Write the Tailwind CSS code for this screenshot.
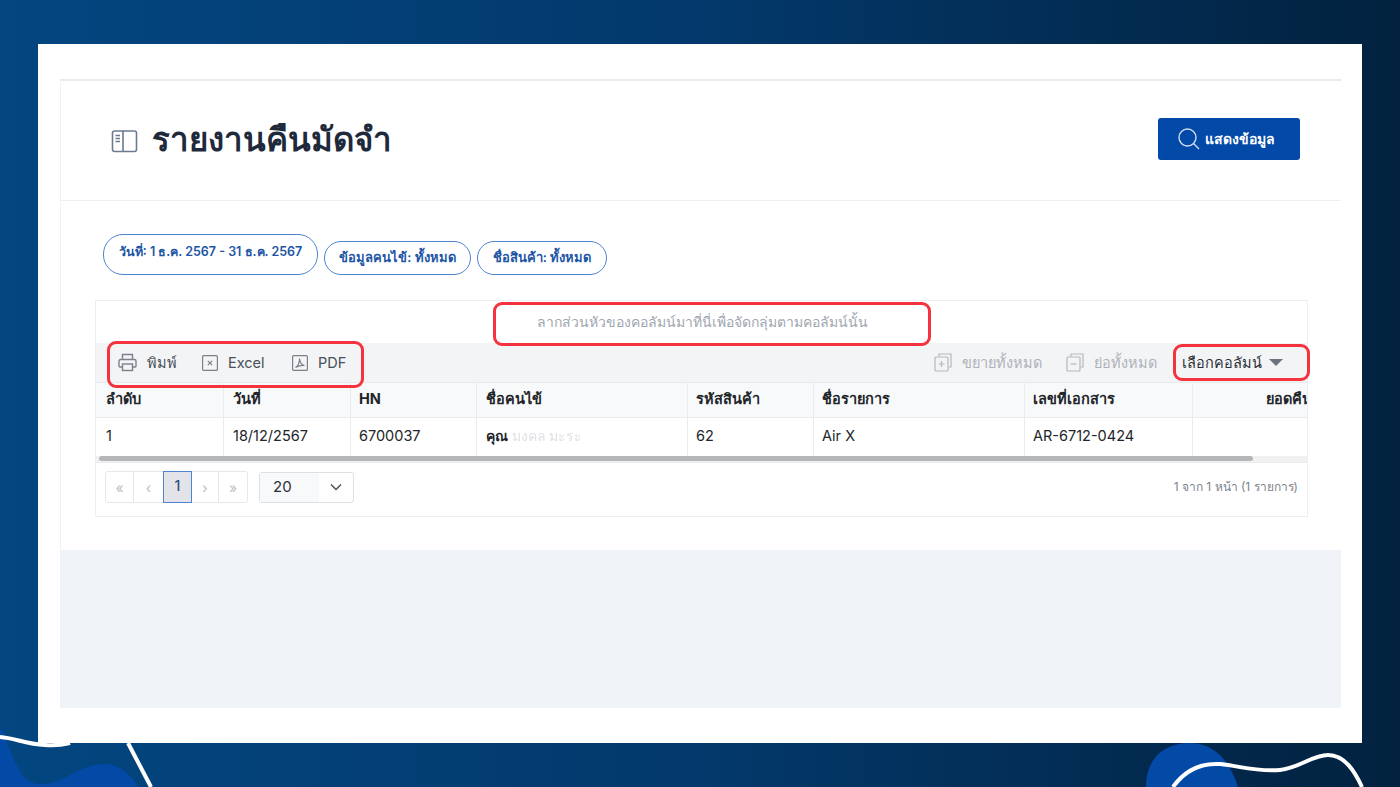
<!DOCTYPE html>
<html lang="en">
<head>
  <meta charset="UTF-8">
  <title>รายงานคืนมัดจำ</title>
  <script src="https://cdn.jsdelivr.net/npm/@tailwindcss/browser@4"></script>
</head>
<body class="relative w-[1400px] h-[787px] overflow-hidden bg-gradient-to-r from-[#034680] via-[#03396c] to-[#02223f] font-['Inter','Noto_Sans',sans-serif] text-[#212529]">

  <!-- Decoration at the bottom corners -->
  <svg class="absolute left-0 bottom-0" width="260" height="87" viewBox="0 0 260 87" fill="none">
    <path d="M0 28C8 36 10 60 25 78C32 86 50 86 65 78C78 70 92 63 107 64C122 66 132 76 138 87H0Z" fill="#0349a6"/>
    <path d="M0 37C15 38 25 44 45 45C55 46 62 45 70 43" stroke="#fff" stroke-width="4"/>
    <path d="M128 43L151 87" stroke="#fff" stroke-width="4"/>
  </svg>
  <svg class="absolute left-[1100px] bottom-0" width="300" height="87" viewBox="0 0 300 87" fill="none">
    <path d="M46 87C46 60 62 43 90 43C115 43 130 62 138 87Z" fill="#0349a6"/>
    <path d="M73 87C85 70 102 63 120 64C140 66 155 72 180 70C200 68 212 55 228 55C245 55 255 72 262 87" stroke="#fff" stroke-width="4"/>
  </svg>

  <!-- White frame -->
  <div class="relative mt-[44px] ml-[38px] w-[1324px] h-[699px] bg-white pt-[35px] pl-[22px] pr-[21px]">
    <div class="h-[629px] flex flex-col border-t-2 border-l border-t-[#e8eaee] border-l-[#f1f2f5] bg-white">

      <!-- Title bar -->
      <div class="h-[120px] shrink-0 flex items-center justify-between pl-[50px] pr-[41px] border-b border-[#eceff4]">
        <div class="flex items-center gap-[14px]">
          <svg width="27" height="24" viewBox="0 0 27 24" fill="none" stroke="#6b7a90" stroke-width="1.6">
            <rect x="1.5" y="2" width="24" height="20.5" rx="2"/>
            <path d="M12 2v20.5M4.5 6.5h4.5M4.5 9.5h4.5M4.5 12.5h4.5"/>
          </svg>
          <h1 class="text-[33px] leading-none font-bold text-[#1e2a3b] mb-[2px]">รายงานคืนมัดจำ</h1>
        </div>
        <button class="w-[142px] h-[42px] mb-[4px] pr-[6px] flex items-center justify-center gap-[5px] rounded-[3px] bg-[#0349a8] text-white text-[14px] font-semibold">
          <svg width="22" height="22" viewBox="0 0 22 22" fill="none" stroke="#cfdcf0" stroke-width="1.4">
            <circle cx="9.5" cy="9.5" r="8.5"/>
            <path d="M15.5 15.5L21 21"/>
          </svg>
          แสดงข้อมูล
        </button>
      </div>

      <!-- Filter chips -->
      <div class="h-[99px] shrink-0 pl-[42px] pt-[33px] flex items-start gap-[6px] text-[13px] font-semibold text-[#1d55a5]">
        <div class="w-[215px] h-[41px] rounded-[20px] border-[1.5px] border-[#4f84cf] flex justify-center pt-[8px] text-[12.5px]">วันที่: 1 ธ.ค. 2567 - 31 ธ.ค. 2567</div>
        <div class="mt-[7px] w-[147px] h-[34px] rounded-[17px] border-[1.5px] border-[#4f84cf] flex items-center justify-center">ข้อมูลคนไข้: ทั้งหมด</div>
        <div class="mt-[7px] w-[130px] h-[34px] rounded-[17px] border-[1.5px] border-[#4f84cf] flex items-center justify-center">ชื่อสินค้า: ทั้งหมด</div>
      </div>

      <!-- Grid -->
      <div class="relative ml-[34px] w-[1213px] h-[217px] shrink-0">
        <div class="h-full border border-[#eceef1] overflow-hidden">
          <div class="h-[42px] flex items-center justify-center pl-[1px] pb-[2px] text-[14px] text-[#a0a6b0] bg-white">ลากส่วนหัวของคอลัมน์มาที่นี่เพื่อจัดกลุ่มตามคอลัมน์นั้น</div>

          <!-- Toolbar -->
          <div class="h-[40px] flex items-center justify-between bg-[#f3f4f6] border-b border-[#e8eaed] pl-[22px] pr-[24px] text-[14.5px]">
            <div class="flex items-center text-[#495057]">
              <svg class="mr-[10px]" width="19" height="19" viewBox="0 0 19 19" fill="none" stroke="#7b818a" stroke-width="1.4">
                <path d="M4.5 6.5V1.5h10v5M4.5 14H2a1 1 0 0 1-1-1V8a1.500 1.500 0 0 1 1.500-1.500h14A1.500 1.500 0 0 1 18 8v5a1 1 0 0 1-1 1h-2.500"/>
                <rect x="4.500" y="11" width="10" height="6.500"/>
              </svg>
              <span class="w-[55px] font-medium">พิมพ์</span>
              <svg class="mr-[10px]" width="16" height="16" viewBox="0 0 16 16" fill="none" stroke="#7b818a" stroke-width="1.2">
                <rect x=".6" y=".6" width="14.800" height="14.800" rx="1"/>
                <path d="M5.800 5.800l4.400 4.400M10.200 5.800l-4.400 4.400"/>
              </svg>
              <span class="w-[64px]">Excel</span>
              <svg class="mr-[10px]" width="16" height="16" viewBox="0 0 16 16" fill="none" stroke="#7b818a" stroke-width="1.2">
                <rect x=".6" y=".6" width="14.800" height="14.800" rx="1"/>
                <path d="M3.500 12.500C6 11 7.500 7.500 7.600 3.500C8 8 10 10 12.500 10.500C9.500 10.300 6 11 3.500 12.500Z"/>
              </svg>
              <span>PDF</span>
            </div>
            <div class="flex items-center text-[#adb2b9]">
              <svg class="mr-[10px]" width="18" height="19" viewBox="0 0 18 19" fill="none" stroke="#b4b8be" stroke-width="1.2">
                <path d="M5 3.500V1h12v13h-2.500"/>
                <rect x="1" y="4" width="13" height="14" rx="1"/>
                <path d="M7.500 8v6M4.500 11h6"/>
              </svg>
              <span class="w-[104px]">ขยายทั้งหมด</span>
              <svg class="mr-[10px]" width="18" height="19" viewBox="0 0 18 19" fill="none" stroke="#b4b8be" stroke-width="1.2">
                <path d="M5 3.500V1h12v13h-2.500"/>
                <rect x="1" y="4" width="13" height="14" rx="1"/>
                <path d="M4.500 11h6"/>
              </svg>
              <span class="w-[88px]">ย่อทั้งหมด</span>
              <span class="w-[87px] text-[#2b3036] font-medium">เลือกคอลัมน์</span>
              <span class="w-0 h-0 border-x-[7px] border-x-transparent border-t-[7px] border-t-[#6c7280]"></span>
            </div>
          </div>

          <!-- Columns -->
          <div class="grid grid-cols-[128px_127px_126px_211px_126px_211px_168px_160px] w-[1277px] text-[14.5px]">
            <div class="h-[35px] flex items-center pl-[10px] pb-[2px] bg-[#f8f9fa] border-r border-b border-[#e9ebee] font-bold">ลำดับ</div>
            <div class="h-[35px] flex items-center pl-[9px] pb-[2px] bg-[#f8f9fa] border-r border-b border-[#e9ebee] font-bold">วันที่</div>
            <div class="h-[35px] flex items-center pl-[8px] pb-[2px] bg-[#f8f9fa] border-r border-b border-[#e9ebee] font-bold">HN</div>
            <div class="h-[35px] flex items-center pl-[9px] pb-[2px] bg-[#f8f9fa] border-r border-b border-[#e9ebee] font-bold">ชื่อคนไข้</div>
            <div class="h-[35px] flex items-center pl-[8px] pb-[2px] bg-[#f8f9fa] border-r border-b border-[#e9ebee] font-bold">รหัสสินค้า</div>
            <div class="h-[35px] flex items-center pl-[8px] pb-[2px] bg-[#f8f9fa] border-r border-b border-[#e9ebee] font-bold">ชื่อรายการ</div>
            <div class="h-[35px] flex items-center pl-[8px] pb-[2px] bg-[#f8f9fa] border-r border-b border-[#e9ebee] font-bold">เลขที่เอกสาร</div>
            <div class="h-[35px] flex items-center pl-[73px] pb-[2px] bg-[#f8f9fa] border-b border-[#e9ebee] font-bold">ยอดคืน</div>

            <div class="h-[38px] flex items-center pl-[10px] pb-[3px] border-r border-[#e9ebee]">1</div>
            <div class="h-[38px] flex items-center pl-[9px] pb-[3px] border-r border-[#e9ebee]">18/12/2567</div>
            <div class="h-[38px] flex items-center pl-[8px] pb-[3px] border-r border-[#e9ebee]">6700037</div>
            <div class="h-[38px] flex items-center pl-[9px] pb-[3px] border-r border-[#e9ebee] font-semibold text-[14px]">คุณ&nbsp;<span class="text-[#dfe1e4] font-normal blur-[0.5px]">มงคล มะระ</span></div>
            <div class="h-[38px] flex items-center pl-[8px] pb-[3px] border-r border-[#e9ebee]">62</div>
            <div class="h-[38px] flex items-center pl-[8px] pb-[3px] border-r border-[#e9ebee]">Air X</div>
            <div class="h-[38px] flex items-center pl-[8px] pb-[3px] border-r border-[#e9ebee]">AR-6712-0424</div>
            <div class="h-[38px]"></div>
          </div>

          <!-- Scrollbar -->
          <div class="h-[7px] bg-[#f1f1f1] pl-[3px] border-b border-[#e9ebee]">
            <div class="w-[1154px] h-[5px] rounded-full bg-[#b5b6b8]"></div>
          </div>

          <!-- Pager -->
          <div class="h-[54px] pb-[6px] flex items-center justify-between pl-[9px] pr-[9px]">
            <div class="flex items-center">
              <div class="flex h-[32px] rounded-[3px] border border-[#e6e8eb] text-[#b9bdc3] text-[14px]">
                <span class="w-[28px] flex items-center justify-center border-r border-[#e6e8eb]">«</span>
                <span class="w-[29px] flex items-center justify-center">‹</span>
                <span class="w-[29px] pb-[3px] flex items-center justify-center bg-[#e2e4e9] border border-[#4f84cf] text-[#33507a] font-medium -my-px">1</span>
                <span class="w-[27px] flex items-center justify-center border-r border-[#e6e8eb]">›</span>
                <span class="w-[28px] flex items-center justify-center">»</span>
              </div>
              <div class="ml-[11px] w-[95px] h-[31px] flex rounded-[3px] border border-[#dcdfe3] text-[15px] text-[#2b3036]">
                <span class="w-[59px] pl-[13px] flex items-center bg-[#f8f9fa]">20</span>
                <span class="flex-1 flex items-center justify-center">
                  <svg width="14" height="8" viewBox="0 0 14 8" fill="none" stroke="#4b5158" stroke-width="1.500"><path d="M2 1.500l5 5 5-5"/></svg>
                </span>
              </div>
            </div>
            <div class="text-[12px] text-[#7d838b]">1 จาก 1 หน้า (1 รายการ)</div>
          </div>
        </div>

        <!-- Red callouts -->
        <div class="absolute left-[398px] top-[2px] w-[438px] h-[44px] rounded-[9px] border-[3px] border-[#f5333f]"></div>
        <div class="absolute left-[12px] top-[41px] w-[257px] h-[47px] rounded-[9px] border-[3px] border-[#f5333f]"></div>
        <div class="absolute left-[1078px] top-[44px] w-[137px] h-[37px] rounded-[9px] border-[3px] border-[#f5333f]"></div>
      </div>

      <!-- Empty page area -->
      <div class="mt-[33px] flex-1 bg-[#f0f3f8]"></div>
    </div>
  </div>
</body>
</html>
